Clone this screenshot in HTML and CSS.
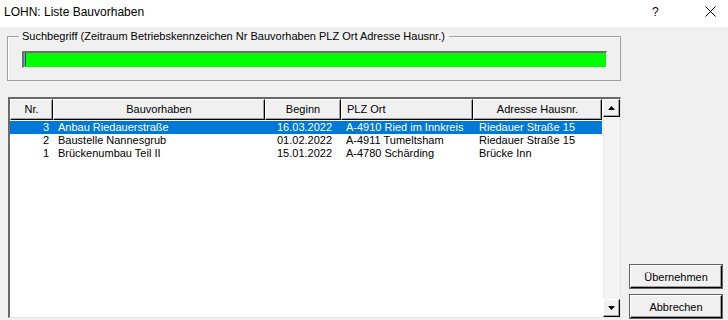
FILE: index.html
```html
<!DOCTYPE html>
<html lang="de">
<head>
    <meta charset="UTF-8">
    <title>LOHN: Liste Bauvorhaben</title>
    <link rel="stylesheet" href="styles.css">
</head>
<body>
    <div class="titlebar">
        <span class="title">LOHN: Liste Bauvorhaben</span>
        <span class="tb-help">?</span>
        <span class="tb-close">
            <svg width="11" height="11" viewBox="0 0 11 11"><path d="M0.5 0.5 L10.5 10.5 M10.5 0.5 L0.5 10.5" stroke="#000" stroke-width="1" fill="none"/></svg>
        </span>
    </div>
    <div class="dialog">
        <div class="main">
            <fieldset class="group">
                <legend>Suchbegriff (Zeitraum Betriebskennzeichen Nr Bauvorhaben PLZ Ort Adresse Hausnr.)</legend>
                <div class="search"><span class="caret"></span></div>
            </fieldset>
            <div class="list">
                <div class="grid">
                    <div class="head">
                        <div class="hcell c-nr">Nr.</div>
                        <div class="hcell c-bv">Bauvorhaben</div>
                        <div class="hcell c-dt">Beginn</div>
                        <div class="hcell c-plz left">PLZ Ort</div>
                        <div class="hcell c-adr">Adresse Hausnr.</div>
                    </div>
                    <div class="row selected">
                        <div class="cell c-nr num">3</div>
                        <div class="cell c-bv">Anbau Riedauerstraße</div>
                        <div class="cell c-dt">16.03.2022</div>
                        <div class="cell c-plz">A-4910 Ried im Innkreis</div>
                        <div class="cell c-adr">Riedauer Straße 15</div>
                    </div>
                    <div class="row">
                        <div class="cell c-nr num">2</div>
                        <div class="cell c-bv">Baustelle Nannesgrub</div>
                        <div class="cell c-dt">01.02.2022</div>
                        <div class="cell c-plz">A-4911 Tumeltsham</div>
                        <div class="cell c-adr">Riedauer Straße 15</div>
                    </div>
                    <div class="row">
                        <div class="cell c-nr num">1</div>
                        <div class="cell c-bv">Brückenumbau Teil II</div>
                        <div class="cell c-dt">15.01.2022</div>
                        <div class="cell c-plz">A-4780 Schärding</div>
                        <div class="cell c-adr">Brücke Inn</div>
                    </div>
                </div>
                <div class="scrollbar">
                    <div class="sb-btn">
                        <svg width="7" height="4" viewBox="0 0 7 4"><path d="M3.5 0 L7 4 L0 4 Z" fill="#000"/></svg>
                    </div>
                    <div class="sb-track"></div>
                    <div class="sb-btn">
                        <svg width="7" height="4" viewBox="0 0 7 4"><path d="M0 0 L7 0 L3.5 4 Z" fill="#000"/></svg>
                    </div>
                </div>
            </div>
        </div>
        <div class="side">
            <button class="btn">Übernehmen</button>
            <button class="btn">Abbrechen</button>
        </div>
    </div>
</body>
</html>
```

FILE: styles.css
```css
* {
    margin: 0;
    padding: 0;
    box-sizing: border-box;
}
body {
    width: 728px;
    height: 320px;
    overflow: hidden;
    background-color: #f0f0f0;
    font-family: "Liberation Sans", Arial, sans-serif;
    font-size: 11px;
    color: #000;
}
.titlebar {
    height: 27px;
    background-color: #fff;
    display: flex;
    align-items: center;
    padding-left: 4px;
    padding-bottom: 4px;
}
.title {
    font-size: 12px;
    flex: 1;
}
.tb-help {
    font-size: 12px;
    width: 53px;
}
.tb-close {
    width: 23px;
    display: flex;
}
.dialog {
    display: flex;
    height: 293px;
}
.main {
    width: 622px;
    padding-left: 7px;
    padding-top: 3px;
}
.group {
    height: 51px;
    border: 1px solid #a0a0a0;
    box-shadow: inset 1px 1px 0 #fff;
    padding: 0 0 0 14px;
    margin-right: 1px;
}
.group legend {
    padding: 0 4px 0 3px;
    margin-left: -3px;
    line-height: 12px;
}
.search {
    width: 585px;
    height: 17px;
    margin-top: 9px;
    background-color: #00ff00;
    border-top: 2px solid #707070;
    border-left: 2px solid #707070;
    border-right: 1px solid #f8f8f8;
    border-bottom: 1px solid #f8f8f8;
    position: relative;
}
.caret {
    position: absolute;
    left: 1px;
    top: 0;
    width: 1px;
    height: 13px;
    background-color: #8000ff;
}
.list {
    margin-top: 16px;
    margin-left: 1px;
    width: 613px;
    height: 221px;
    background-color: #fff;
    border-top: 2px solid #696969;
    border-left: 2px solid #696969;
    border-right: 1px solid #e3e3e3;
    border-bottom: 1px solid #e3e3e3;
    display: flex;
}
.grid {
    width: 592px;
}
.head {
    display: flex;
    height: 21px;
}
.hcell {
    background-color: #f0f0f0;
    border-top: 1px solid #fff;
    border-left: 1px solid #fff;
    border-right: 1px solid #000;
    border-bottom: 1px solid #000;
    box-shadow: inset -1px -1px 0 #a0a0a0;
    display: flex;
    align-items: center;
    justify-content: center;
    padding-bottom: 1px;
}
.hcell.left {
    justify-content: flex-start;
    padding-left: 5px;
}
.c-nr { width: 43px; }
.c-bv { width: 212px; }
.c-dt { width: 76px; }
.c-plz { width: 132px; }
.c-adr { width: 129px; }
.row {
    display: flex;
    height: 13px;
    line-height: 13px;
}
.head + .row {
    margin-top: 1px;
}
.row.selected {
    background-color: #0078d7;
    color: #fff;
}
.cell {
    padding-left: 5px;
    white-space: nowrap;
    overflow: hidden;
}
.cell.num {
    text-align: right;
    padding-left: 0;
    padding-right: 4px;
}
.cell.c-dt {
    padding-left: 12px;
}
.cell.c-plz {
    padding-left: 5px;
}
.cell.c-adr {
    padding-left: 6px;
}
.scrollbar {
    width: 18px;
    margin-left: 1px;
    display: flex;
    flex-direction: column;
    background-color: #f0f0f0;
}
.sb-btn {
    height: 18px;
    background-color: #f0f0f0;
    border-top: 1px solid #fff;
    border-left: 1px solid #fff;
    border-right: 1px solid #000;
    border-bottom: 1px solid #000;
    box-shadow: inset -1px -1px 0 #a0a0a0;
    display: flex;
    align-items: center;
    justify-content: center;
}
.sb-track {
    flex: 1;
    background-color: #f4f4f4;
    border-left: 1px solid #e8e8e8;
}
.side {
    flex: 1;
    display: flex;
    flex-direction: column;
    padding-top: 238px;
    padding-left: 8px;
    gap: 7px;
}
.btn {
    width: 92px;
    height: 23px;
    font-family: "Liberation Sans", Arial, sans-serif;
    font-size: 11px;
    color: #000;
    background-color: #f0f0f0;
    border-top: 1px solid #fff;
    border-left: 1px solid #fff;
    border-right: 1px solid #000;
    border-bottom: 1px solid #000;
    box-shadow: inset -1px -1px 0 #a0a0a0;
    outline: 1px solid #646464;
    outline-offset: 0;
}
```
